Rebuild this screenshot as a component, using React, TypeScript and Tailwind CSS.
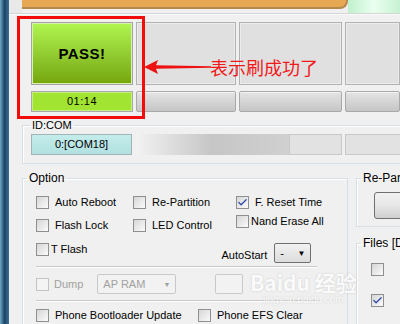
import { Check } from 'lucide-react';

function CheckBox({ checked = false, disabled = false }: { checked?: boolean; disabled?: boolean }) {
  return (
    <span
      className={`relative flex h-[13px] w-[13px] shrink-0 items-center justify-center border ${
        disabled
          ? 'border-[#c4c4c4] bg-[#f4f4f4]'
          : 'border-[#8e8f8f] bg-gradient-to-br from-[#d6d6d6] to-[#fbfbfb]'
      }`}
    >
      {checked && <Check className="h-[11px] w-[11px] text-[#2a46a8]" strokeWidth={2.6} />}
    </span>
  );
}

function Opt({ label, checked, disabled, gap = 'gap-[6px]' }: { label: string; checked?: boolean; disabled?: boolean; gap?: string }) {
  return (
    <div className={`flex items-center ${gap}`}>
      <CheckBox checked={checked} disabled={disabled} />
      <span className={disabled ? 'text-[#a0a0a0]' : 'text-black'}>{label}</span>
    </div>
  );
}

function Slot() {
  return <div className="border border-[#b2b2b2] bg-[#e0e0e0] shadow-[inset_0_0_0_1px_#ececec]" />;
}

function Bar() {
  return (
    <div className="rounded-[2px] border border-[#a9a9a9] bg-gradient-to-b from-[#e4e4e4] to-[#c6c6c6] shadow-[inset_0_1px_0_#f4f4f4]" />
  );
}

export default function App() {
  return (
    <div className="relative flex h-[324px] w-[400px] items-start overflow-hidden bg-[#f0f0f0] font-['Liberation_Sans',Tahoma,sans-serif] text-[11px] leading-[13px] text-black">
      {/* window frame on the left */}
      <div className="h-[324px] w-[9px] shrink-0 bg-gradient-to-r from-[#6fa8c8] via-[#1d4566] to-[#3a6f94]" />

      <div className="flex min-w-0 flex-1 flex-col">
        {/* top banner */}
        <div className="flex h-[14px] shrink-0 border-b border-[#d4d4d4]">
          <div className="w-[13px] bg-[#e9e9e9]" />
          <div className="h-[9px] w-[326px] rounded-br-[8px] border-b-2 border-r-2 border-[#b48a4c] bg-[#e6a852]" />
          <div className="flex-1 bg-gradient-to-r from-[#bff0cc] via-[#eafff0] to-[#c6f2d2]" />
        </div>
        <div className="h-px shrink-0 bg-[#fbfbfb]" />

        {/* slot row */}
        <div className="mt-[7px] grid h-[63px] shrink-0 grid-cols-[102px_100px_103px_1fr] gap-[3px] pl-[22px]">
          <div className="flex items-center justify-center border border-[#a3a3a3] bg-gradient-to-b from-[#b0f650] to-[#76a608] shadow-[inset_0_0_0_1px_#d8f0b0]">
            <span className="text-[15px] font-bold tracking-[0.5px]">PASS!</span>
          </div>
          <Slot />
          <Slot />
          <Slot />
        </div>

        {/* time row */}
        <div className="mt-[6px] grid h-[21px] shrink-0 grid-cols-[102px_100px_103px_1fr] gap-[3px] pl-[22px]">
          <div className="flex items-center justify-center border border-[#a9a9a9] bg-[#a2e432] shadow-[inset_0_0_0_1px_#c6ee80]">
            <span className="tracking-[0.5px]">01:14</span>
          </div>
          <Bar />
          <Bar />
          <Bar />
        </div>

        {/* ID:COM group */}
        <fieldset className="ml-[13px] mt-[7px] w-[420px] shrink-0 border border-[#d5dfe5] shadow-[inset_1px_1px_0_#ffffff]">
          <legend className="ml-[7px] px-[2px]">ID:COM</legend>
          <div className="mt-[2px] flex h-[21px] pb-0 pl-[8px]">
            <div className="flex w-[101px] items-center justify-center border border-[#a2b4b4] bg-gradient-to-b from-[#c4ecec] to-[#b2e0e0]">
              0:[COM18]
            </div>
            <div className="ml-[4px] w-[153px] bg-gradient-to-r from-[#f2f2f2] via-[#c6c6c6] to-[#d0d0d0]" />
            <div className="w-[53px] border border-[#c8c8c8] bg-[#e2e2e2]" />
            <div className="ml-[3px] flex-1 border border-[#c8c8c8] bg-[#e2e2e2]" />
          </div>
          <div className="h-[8px]" />
        </fieldset>

        {/* options + right column */}
        <div className="mt-[8px] flex shrink-0 gap-[8px] pl-[13px]">
          <fieldset className="h-[160px] w-[326px] shrink-0 border border-[#d5dfe5] shadow-[inset_1px_1px_0_#ffffff]">
            <legend className="ml-[4px] px-[2px] text-[12px]">Option</legend>
            <div className="pl-[13px]">
              <div className="mt-[11px] grid grid-cols-[97px_103px_1fr]">
                <Opt label="Auto Reboot" />
                <Opt label="Re-Partition" />
                <Opt label="F. Reset Time" checked />
              </div>
              <div className="mt-[10px] grid grid-cols-[97px_103px_1fr]">
                <Opt label="Flash Lock" />
                <Opt label="LED Control" />
                <div className="-mt-[4px]">
                  <Opt label="Nand Erase All" gap="gap-[2px]" />
                </div>
              </div>
              <div className="mt-[11px] flex h-[20px] items-start">
                <Opt label="T Flash" gap="gap-[2px]" />
                <span className="ml-[134px] mt-[6px]">AutoStart</span>
                <div className="ml-[7px] flex h-[20px] w-[37px] items-center justify-between rounded-[2px] border border-[#707070] bg-gradient-to-b from-[#f2f2f2] to-[#dcdcdc] px-[5px]">
                  <span>-</span>
                  <span className="text-[8px]">▼</span>
                </div>
              </div>
              <div className="mr-[30px] mt-[3px] h-px bg-[#c8c8c8] shadow-[0_1px_0_#ffffff]" />
              <div className="mt-[7px] flex h-[20px] items-center">
                <Opt label="Dump" disabled gap="gap-[5px]" />
                <div className="ml-[14px] flex h-[20px] w-[79px] items-center justify-between rounded-[2px] border border-[#c8c8c8] bg-[#f2f2f2] px-[5px] text-[#a0a0a0]">
                  <span>AP RAM</span>
                  <span className="text-[7px]">▼</span>
                </div>
                <div className="ml-[39px] h-[20px] w-[28px] rounded-[2px] border border-[#c8c8c8] bg-[#f2f2f2]" />
              </div>
              <div className="mr-[28px] mt-[6px] h-px bg-[#c8c8c8] shadow-[0_1px_0_#ffffff]" />
              <div className="mt-[8px] flex">
                <div className="w-[162px]">
                  <Opt label="Phone Bootloader Update" />
                </div>
                <Opt label="Phone EFS Clear" />
              </div>
            </div>
          </fieldset>

          <div className="flex w-[110px] shrink-0 flex-col">
            <fieldset className="h-[55px] shrink-0 border border-[#d5dfe5] shadow-[inset_1px_1px_0_#ffffff]">
              <legend className="ml-[4px] whitespace-nowrap px-[2px] text-[12px]">Re-Partition</legend>
              <div className="ml-[17px] mt-[7px] h-[27px] w-[80px] rounded-[3px] border border-[#707070] bg-gradient-to-b from-[#f2f2f2] via-[#e6e6e6] to-[#cfcfcf]" />
            </fieldset>
            <fieldset className="mt-[10px] h-[100px] shrink-0 border border-[#d5dfe5] shadow-[inset_1px_1px_0_#ffffff]">
              <legend className="ml-[4px] whitespace-nowrap px-[2px] text-[12px]">Files [Download]</legend>
              <div className="pl-[14px]">
                <div className="mt-[6px] flex items-start gap-[16px]">
                  <div className="mt-[7px]">
                    <CheckBox />
                  </div>
                  <div className="h-[26px] w-[40px] rounded-[2px] border border-[#a0a0a0] bg-[#f8f8f8]" />
                </div>
                <div className="mt-[6px] flex items-start gap-[16px]">
                  <div className="mt-[6px]">
                    <CheckBox checked />
                  </div>
                  <div className="h-[26px] w-[40px] rounded-[2px] border border-[#a0a0a0] bg-[#f8f8f8]" />
                </div>
              </div>
            </fieldset>
          </div>
        </div>
      </div>

      {/* annotation: red frame, arrow and note */}
      <div className="absolute left-[17px] top-[16px] h-[103px] w-[128px] border-[3px] border-[#f20d0d]" />
      <svg className="absolute left-[144px] top-[58px]" width="68" height="18" viewBox="0 0 68 18">
        <polygon points="0,9 14,2 12,7.2 67,8.2 67,9.8 12,10.8 14,16" fill="#ee1111" />
      </svg>
      <div className="absolute left-[210px] top-[56px] font-['Noto_Sans_CJK_SC',sans-serif] text-[18px] leading-[22px] text-[#f01818]">
        表示刷成功了
      </div>

      {/* watermark */}
      <div className="pointer-events-none absolute left-[250px] top-[270px] flex flex-col items-center text-white opacity-70 [text-shadow:0_0_2px_#b8b8b8]">
        <span className="font-['Noto_Sans_CJK_SC',sans-serif] text-[21px] font-bold leading-[24px]">Baidu 经验</span>
        <span className="text-[10px] leading-[11px]">jingyan.baidu.com</span>
      </div>
    </div>
  );
}
